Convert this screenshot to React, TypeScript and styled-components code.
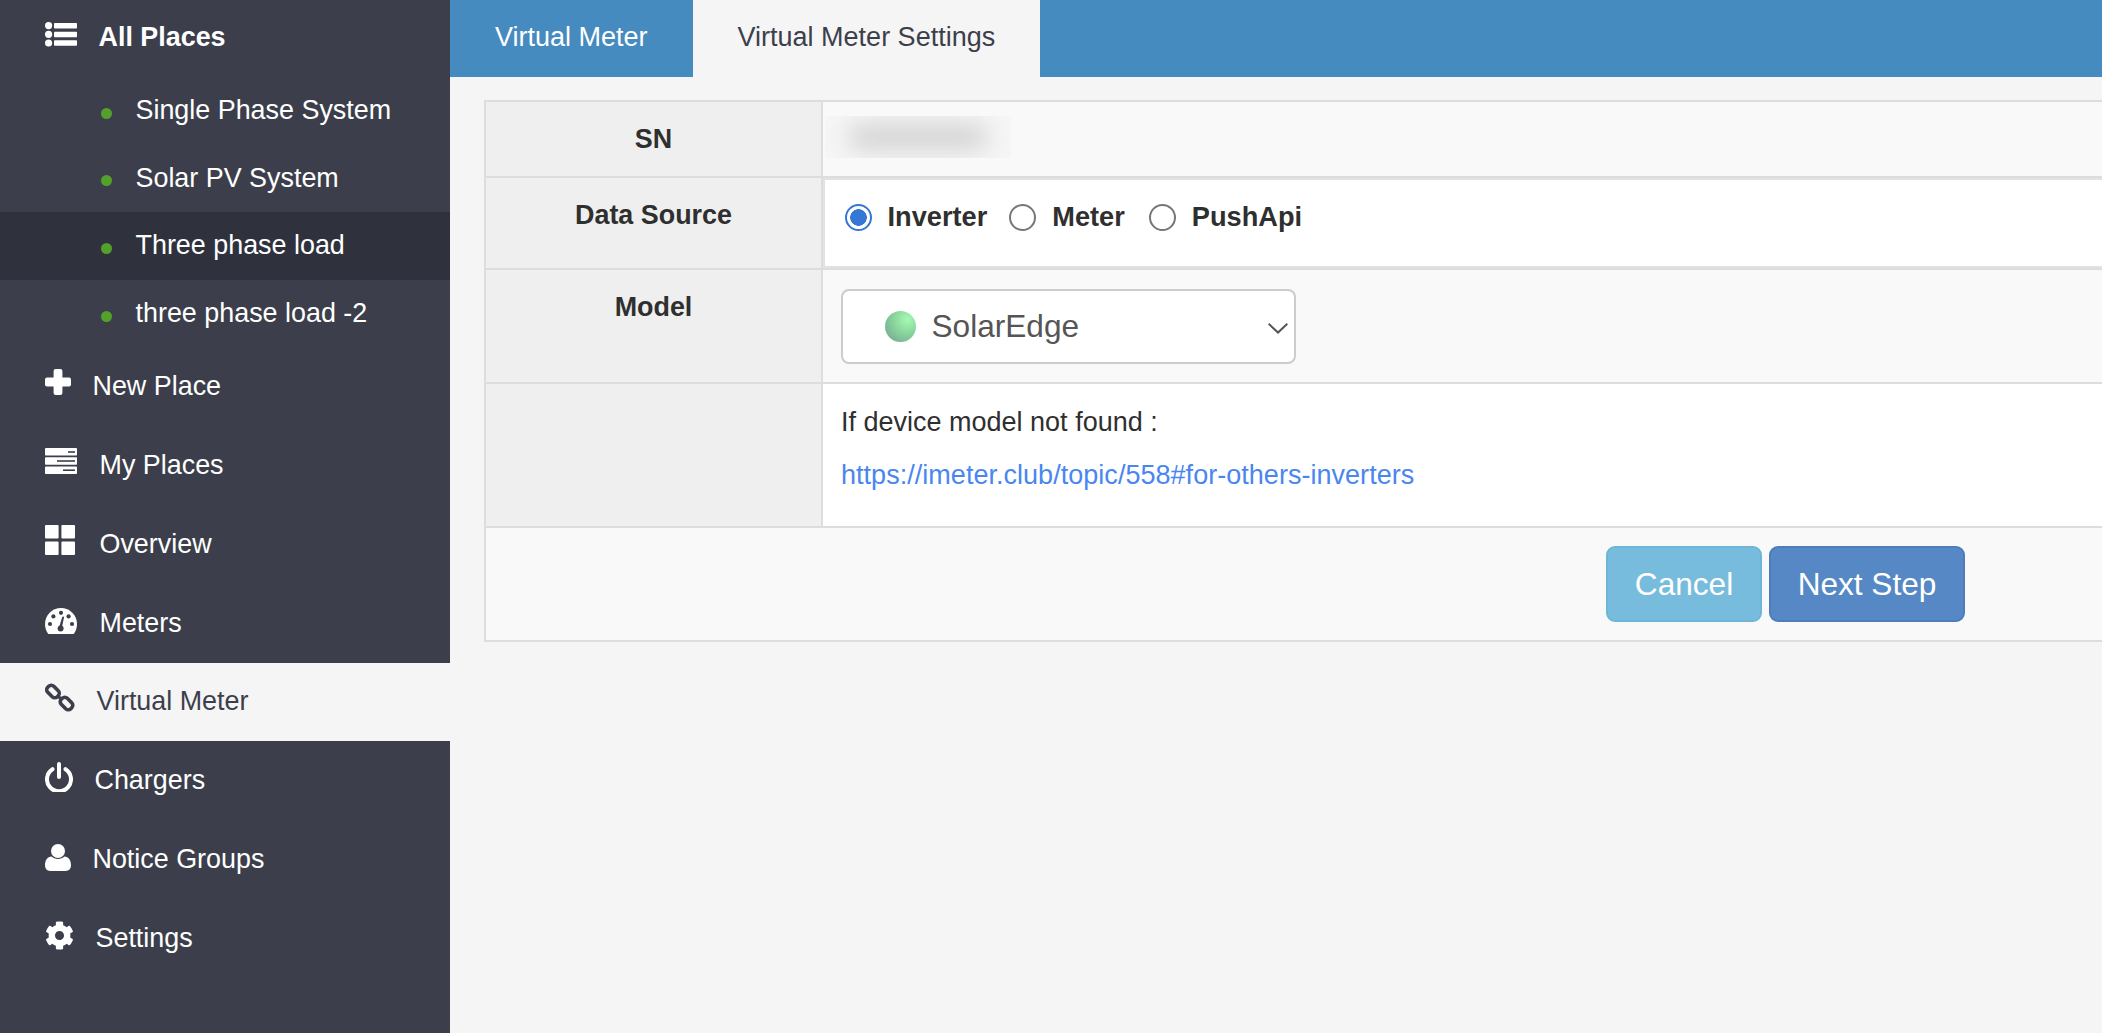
import React from "react";
import styled, { createGlobalStyle } from "styled-components";
import { FaCog } from "react-icons/fa";

const Global = createGlobalStyle`
  html, body { margin: 0; padding: 0; height: 100%; overflow: hidden; background: #f5f5f5; }
  body { font-family: "Liberation Sans", Arial, sans-serif; }
  * { box-sizing: border-box; }
`;

const Shell = styled.div`
  display: flex;
  width: 100%;
  height: 100vh;
  overflow: hidden;
`;

const Sidebar = styled.nav`
  flex: 0 0 450px;
  background: #3c3f4b;
  display: flex;
  flex-direction: column;
`;

const NavRow = styled.a<{ $active?: boolean; $height?: number; $bold?: boolean }>`
  display: flex;
  align-items: center;
  height: ${(p) => p.$height ?? 78.8}px;
  padding-left: 45px;
  padding-bottom: ${(p) => (p.$bold ? 2 : 0)}px;
  color: ${(p) => (p.$active ? "#3c3f4b" : "#fff")};
  background: ${(p) => (p.$active ? "#f5f5f5" : "transparent")};
  font-size: 26.9px;
  font-weight: ${(p) => (p.$bold ? 700 : 400)};
`;

const IconBox = styled.span<{ $w: number; $shift: number }>`
  flex: 0 0 ${(p) => p.$w}px;
  display: flex;
  margin-right: 21.5px;
  margin-top: ${(p) => p.$shift}px;
  svg { display: block; }
`;

const SubRow = styled.a<{ $active?: boolean }>`
  display: flex;
  align-items: center;
  height: 67.6px;
  padding-left: 101px;
  color: #fff;
  font-size: 26.9px;
  background: ${(p) => (p.$active ? "#2f323d" : "transparent")};
`;

const StatusDot = styled.span`
  width: 11px;
  height: 11px;
  border-radius: 50%;
  background: #53a12b;
  margin-right: 23.5px;
  margin-top: 5px;
`;

const Main = styled.main`
  flex: 1;
  min-width: 0;
  display: flex;
  flex-direction: column;
`;

const TabBar = styled.div`
  display: flex;
  height: 77px;
  background: #458bc0;
`;

const Tab = styled.a<{ $active?: boolean }>`
  display: flex;
  align-items: center;
  padding: 0 45px 3px;
  font-size: 27px;
  color: ${(p) => (p.$active ? "#3c3f4b" : "#fff")};
  background: ${(p) => (p.$active ? "#f5f5f5" : "transparent")};
`;

const Panel = styled.section`
  margin: 23px 0 0 34px;
  border: 2px solid #ddd;
  border-right: 0;
  display: flex;
  flex-direction: column;
`;

const Row = styled.div<{ $height: number }>`
  display: flex;
  height: ${(p) => p.$height}px;
  border-bottom: 2px solid #ddd;
`;

const Label = styled.div<{ $top: number }>`
  flex: 0 0 337px;
  background: #efefef;
  border-right: 2px solid #ddd;
  padding-top: ${(p) => p.$top}px;
  text-align: center;
  font-weight: 700;
  font-size: 26.9px;
  line-height: 30px;
  color: #2f2f2f;
`;

const Value = styled.div<{ $tint?: boolean; $framed?: boolean }>`
  flex: 1;
  min-width: 0;
  background: ${(p) => (p.$tint ? "#f9f9f9" : "#fff")};
  color: #2f2f2f;
  font-size: 27px;
  padding: 0 18px;
  ${(p) => (p.$framed ? "border: 2px solid #e2e2e2; border-right: 0;" : "")}
`;

const SerialMask = styled.div`
  width: 186px;
  height: 42px;
  margin: 14px 0 0 -16px;
  background: #f6f6f6;
  overflow: hidden;
  display: flex;
  align-items: center;
  justify-content: center;
`;

const BlurredSerial = styled.div`
  width: 140px;
  height: 24px;
  border-radius: 12px;
  background: #d0d0d0;
  filter: blur(12px);
`;

const RadioGroup = styled.div`
  display: flex;
  align-items: center;
  height: 58px;
  margin-left: 1.5px;
  margin-top: 8px;
`;

const RadioLabel = styled.label<{ $gap: number }>`
  display: flex;
  align-items: center;
  font-weight: 700;
  font-size: 27.2px;
  line-height: 30px;
  color: #2f2f2f;
  margin-right: ${(p) => p.$gap}px;
  span { margin-top: -1px; }
`;

const Radio = styled.input.attrs({ type: "radio" })`
  appearance: none;
  width: 27px;
  height: 27px;
  margin: 0 16px 0 0;
  border-radius: 50%;
  border: 2.5px solid #767676;
  background: #fff;
  &:checked {
    border-color: #3477d4;
    background: radial-gradient(circle, #3477d4 0 8px, #fff 8.6px);
  }
`;

const ModelSelect = styled.div`
  width: 454.5px;
  height: 75px;
  margin-top: 19px;
  border: 2.5px solid #ccc;
  border-radius: 8px;
  background: #fff;
  display: flex;
  align-items: center;
  padding-left: 42px;
  font-size: 31.6px;
  color: #555;
`;

const Sphere = styled.span`
  width: 31px;
  height: 31px;
  border-radius: 50%;
  margin-right: 15.5px;
  background: radial-gradient(circle at 72% 28%, #a6fab4 0, #8edca0 35%, #6f9f8e 100%);
`;

const Chevron = styled.svg`
  margin: 3px 6px 0 auto;
`;

const Note = styled.p`
  margin: 0;
  padding-top: 23px;
  line-height: 30px;
`;

const DocLink = styled.a`
  display: block;
  margin-top: 22.5px;
  line-height: 30px;
  letter-spacing: 0.03px;
  color: #4a86f0;
`;

const Footer = styled.div`
  display: flex;
  justify-content: flex-end;
  align-items: flex-start;
  gap: 7px;
  height: 112px;
  padding: 18px 137px 0 0;
  background: #f9f9f9;
`;

const Button = styled.button<{ $bg: string; $edge: string; $w: number }>`
  width: ${(p) => p.$w}px;
  height: 76px;
  border: 2px solid ${(p) => p.$edge};
  border-radius: 9px;
  background: ${(p) => p.$bg};
  color: #fff;
  font-family: inherit;
  font-size: 31.6px;
  padding: 0;
`;

const dark = "#3c3f4b";

const ListIcon = () => (
  <svg width="32" height="25" viewBox="0 0 32 25" fill="#fff">
    <circle cx="3.6" cy="3.6" r="3.6" />
    <circle cx="3.6" cy="12.3" r="3.6" />
    <circle cx="3.6" cy="21" r="3.6" />
    <rect x="9" y="1" width="23" height="5.5" rx="0.8" />
    <rect x="9" y="9.7" width="23" height="5.5" rx="0.8" />
    <rect x="9" y="18.3" width="23" height="5.5" rx="0.8" />
  </svg>
);

const PlusIcon = () => (
  <svg width="26" height="26" viewBox="0 0 26 26" fill="#fff">
    <rect x="8.6" y="0" width="8.8" height="26" rx="2" />
    <rect x="0" y="8.6" width="26" height="8.8" rx="2" />
  </svg>
);

const ServerIcon = () => (
  <svg width="32" height="26" viewBox="0 0 32 26" fill="#fff">
    <rect width="32" height="7.6" rx="0.8" />
    <rect y="9.2" width="32" height="7.6" rx="0.8" />
    <rect y="18.4" width="32" height="7.6" rx="0.8" />
    <rect x="23" y="3.2" width="7" height="1.6" fill={dark} />
    <rect x="12" y="12.2" width="18" height="1.6" fill={dark} />
    <rect x="18" y="21.4" width="12" height="1.6" fill={dark} />
  </svg>
);

const GridIcon = () => (
  <svg width="30" height="30" viewBox="0 0 30 30" fill="#fff">
    <rect width="13.6" height="13.6" rx="1" />
    <rect x="16.4" width="13.6" height="13.6" rx="1" />
    <rect y="16.4" width="13.6" height="13.6" rx="1" />
    <rect x="16.4" y="16.4" width="13.6" height="13.6" rx="1" />
  </svg>
);

const GaugeIcon = () => (
  <svg width="32" height="26" viewBox="0 0 32 26">
    <path d="M16 0C7.2 0 0 7.2 0 16c0 3.4 1 6.8 2.9 9.4.4.4.8.6 1.3.6h23.600c.5 0 .9-.2 1.300-.6C31 22.800 32 19.400 32 16 32 7.200 24.800 0 16 0z" fill="#fff" />
    <g fill={dark}>
      <circle cx="5" cy="16" r="2.1" />
      <circle cx="8.4" cy="8.4" r="2.1" />
      <circle cx="23.6" cy="8.4" r="2.1" />
      <circle cx="27" cy="16" r="2.1" />
      <circle cx="16" cy="4.8" r="2.1" />
      <circle cx="15.6" cy="20.4" r="3" />
      <path d="M19 9.500 17 19 14.300 18.500l2.900-9.500c.3-1 2-.6 1.800.5z" />
    </g>
  </svg>
);

const LinkIcon = () => (
  <svg width="30" height="30" viewBox="0 0 30 30" fill="none" stroke={dark} strokeWidth="3.6">
    <rect x="1.25" y="4.25" width="13.5" height="8.5" rx="3.6" transform="rotate(45 8 8.5)" />
    <rect x="14.75" y="16.25" width="13.5" height="8.5" rx="3.6" transform="rotate(45 21.5 20.5)" />
    <path d="M12 12.500 17.500 17" strokeWidth="3" />
  </svg>
);

const PowerIcon = () => (
  <svg width="28" height="30" viewBox="0 0 28 30" fill="none" stroke="#fff" strokeWidth="4" strokeLinecap="round">
    <path d="M7.5 7.2A12 12 0 1 0 20.5 7.2" />
    <path d="M14 2v13" />
  </svg>
);

const UserIcon = () => (
  <svg width="26" height="27" viewBox="0 0 26 27" fill="#fff">
    <ellipse cx="13" cy="7" rx="7" ry="7" />
    <path d="M6.500 12.500c1.700 1.600 3.900 2.400 6.500 2.400s4.800-.8 6.500-2.400c4 .4 6.500 3.600 6.500 8.800 0 3.500-2.100 5.700-5.200 5.700H5.200C2.100 27 0 24.800 0 21.300c0-5.200 2.500-8.400 6.500-8.800z" />
  </svg>
);

const nav = [
  { label: "New Place", w: 26, shift: -9, icon: <PlusIcon /> },
  { label: "My Places", w: 33, shift: -9, icon: <ServerIcon /> },
  { label: "Overview", w: 33, shift: -8, icon: <GridIcon /> },
  { label: "Meters", w: 33, shift: -4, icon: <GaugeIcon /> },
  { label: "Virtual Meter", w: 30, shift: -8, icon: <LinkIcon />, active: true },
  { label: "Chargers", w: 28, shift: -8, icon: <PowerIcon /> },
  { label: "Notice Groups", w: 26, shift: -4, icon: <UserIcon /> },
  { label: "Settings", w: 27.5, shift: -6, icon: <FaCog size={29} color="#fff" /> },
];

const places = ["Single Phase System", "Solar PV System", "Three phase load", "three phase load -2"];

export default function App() {
  return (
    <Shell>
      <Global />
      <Sidebar>
        <NavRow $height={77} $bold>
          <IconBox $w={32} $shift={-6}>
            <ListIcon />
          </IconBox>
          All Places
        </NavRow>
        {places.map((p, i) => (
          <SubRow key={p} $active={i === 2}>
            <StatusDot />
            {p}
          </SubRow>
        ))}
        {nav.map((n) => (
          <NavRow key={n.label} $active={n.active}>
            <IconBox $w={n.w} $shift={n.shift}>
              {n.icon}
            </IconBox>
            {n.label}
          </NavRow>
        ))}
      </Sidebar>
      <Main>
        <TabBar>
          <Tab>Virtual Meter</Tab>
          <Tab $active>Virtual Meter Settings</Tab>
        </TabBar>
        <Panel>
          <Row $height={76}>
            <Label $top={22}>SN</Label>
            <Value $tint>
              <SerialMask>
                <BlurredSerial />
              </SerialMask>
            </Value>
          </Row>
          <Row $height={92}>
            <Label $top={22}>Data Source</Label>
            <Value $framed>
              <RadioGroup>
                <RadioLabel $gap={22}>
                  <Radio defaultChecked name="src" />
                  <span>Inverter</span>
                </RadioLabel>
                <RadioLabel $gap={24}>
                  <Radio name="src" />
                  <span>Meter</span>
                </RadioLabel>
                <RadioLabel $gap={0}>
                  <Radio name="src" />
                  <span>PushApi</span>
                </RadioLabel>
              </RadioGroup>
            </Value>
          </Row>
          <Row $height={114}>
            <Label $top={22}>Model</Label>
            <Value $tint>
              <ModelSelect>
                <Sphere />
                SolarEdge
                <Chevron width="20" height="11" viewBox="0 0 20 11" fill="none" stroke="#555" strokeWidth="2">
                  <path d="M.7.8 10 9.600 19.300.8" />
                </Chevron>
              </ModelSelect>
            </Value>
          </Row>
          <Row $height={144}>
            <Label $top={22} />
            <Value>
              <Note>If device model not found :</Note>
              <DocLink>https://imeter.club/topic/558#for-others-inverters</DocLink>
            </Value>
          </Row>
          <Footer>
            <Button $bg="#77bcdc" $edge="#6db6d9" $w={156}>
              Cancel
            </Button>
            <Button $bg="#5588c4" $edge="#4d7dba" $w={196}>
              Next Step
            </Button>
          </Footer>
        </Panel>
      </Main>
    </Shell>
  );
}
